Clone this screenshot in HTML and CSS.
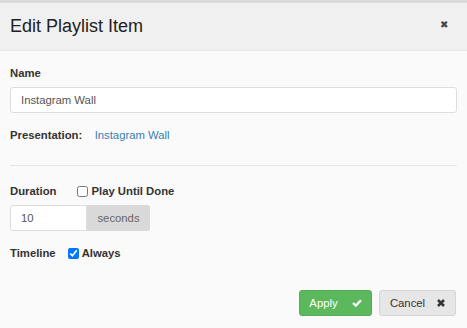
FILE: index.html
```html
<!DOCTYPE html>
<html lang="en">
<head>
  <meta charset="UTF-8">
  <meta name="viewport" content="width=device-width, initial-scale=1.0">
  <title>Edit Playlist Item</title>
  <link rel="stylesheet" href="styles.css">
</head>
<body>
  <div class="modal">
    <div class="modal-header">
      <h4 class="title">Edit Playlist Item</h4>
      <span class="close">&#x2716;</span>
    </div>
    <div class="modal-body">
      <label class="lbl name-lbl">Name</label>
      <input type="text" class="text-input" value="Instagram Wall">
      <div class="pres">
        <span class="lbl">Presentation:</span>
        <a href="#" class="link">Instagram Wall</a>
      </div>
      <hr class="sep">
      <div class="row">
        <span class="lbl">Duration</span>
        <label class="check"><input type="checkbox"> Play Until Done</label>
      </div>
      <div class="input-group">
        <input type="text" class="text-input short" value="10">
        <span class="addon">seconds</span>
      </div>
      <div class="row timeline">
        <span class="lbl">Timeline</span>
        <label class="check"><input type="checkbox" checked> Always</label>
      </div>
    </div>
    <div class="modal-footer">
      <button class="btn apply">Apply
        <svg width="10" height="8" viewBox="0 0 10 8"><path d="M1 4 L3.8 6.6 L9 1.2" fill="none" stroke="#fff" stroke-width="2.3"/></svg>
      </button>
      <button class="btn cancel">Cancel
        <svg width="8" height="8" viewBox="0 0 8 8"><path d="M1 1 L7 7 M7 1 L1 7" stroke="#333" stroke-width="2.5"/></svg>
      </button>
    </div>
  </div>
</body>
</html>
```

FILE: styles.css
```css
body {
  margin: 0;
  background: #fafafa;
  font-family: "Liberation Sans", Arial, sans-serif;
  color: #333;
}

.modal {
  border-top: 3px solid #dadada;
}

.modal-header {
  display: flex;
  align-items: center;
  justify-content: space-between;
  height: 47px;
  padding: 0 10px;
  background: #f0f0f0;
  border-bottom: 1px solid #e8e8e8;
}

.title {
  margin: 0;
  font-size: 18px;
  font-weight: normal;
  color: #222;
}

.close {
  font-size: 10px;
  color: #444;
  margin-right: 9px;
  margin-top: -4px;
}

.modal-body {
  padding: 15px 10px 0;
  line-height: 14px;
}

.lbl {
  font-size: 11.3px;
  font-weight: bold;
  color: #333;
}

.name-lbl {
  display: block;
}

.text-input {
  display: block;
  box-sizing: border-box;
  width: 100%;
  height: 26px;
  margin-top: 7px;
  padding: 0 10px;
  border: 1px solid #ddd;
  border-radius: 3px;
  background: #fff;
  font-family: inherit;
  font-size: 11.3px;
  color: #555;
}

.pres {
  margin-top: 14px;
}

.link {
  margin-left: 8px;
  font-size: 11.3px;
  color: #3a7db3;
  text-decoration: none;
}

.sep {
  margin: 23px 0 18px;
  border: 0;
  border-top: 1px solid #e4e4e4;
}

.row {
  display: flex;
  align-items: center;
}

.check {
  display: flex;
  align-items: center;
  margin-left: 21px;
  font-size: 11.3px;
  font-weight: bold;
}

.check input {
  width: 11px;
  height: 11px;
  margin: 0 3px 0 0;
}

.timeline .check {
  margin-left: 12px;
}

.input-group {
  display: flex;
  width: 140px;
  margin-top: 7px;
}

.input-group .short {
  margin: 0;
  width: 77px;
  border-radius: 3px 0 0 3px;
}

.addon {
  display: flex;
  align-items: center;
  justify-content: center;
  width: 63px;
  height: 26px;
  background: #d9d9d9;
  border-radius: 0 3px 3px 0;
  font-size: 11.3px;
  color: #666;
}

.timeline {
  margin-top: 15px;
}

.modal-footer {
  display: flex;
  justify-content: flex-end;
  gap: 7px;
  padding: 30px 11px 0;
}

.btn {
  display: flex;
  align-items: center;
  justify-content: center;
  height: 26px;
  padding: 0;
  border-radius: 3px;
  font-family: inherit;
  font-size: 11.3px;
}

.apply {
  width: 73px;
  gap: 14px;
  background: #5cb85c;
  border: 1px solid #55ad55;
  color: #fff;
}

.cancel {
  width: 77px;
  gap: 12px;
  background: #e6e6e6;
  border: 1px solid #d5d5d5;
  color: #333;
}
```
